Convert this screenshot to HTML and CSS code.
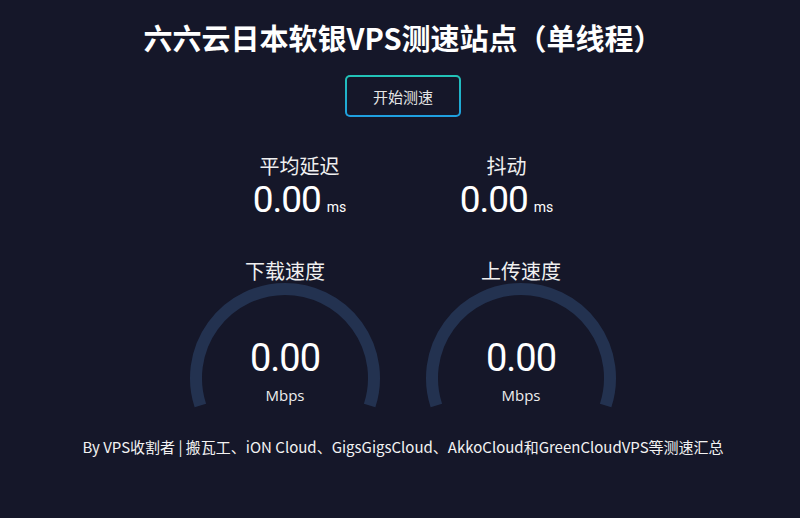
FILE: index.html
```html
<!DOCTYPE html>
<html lang="zh-CN">
<head>
    <meta charset="UTF-8">
    <meta name="viewport" content="width=device-width, initial-scale=1.0">
    <title>六六云日本软银VPS测速站点（单线程）</title>
    <link rel="stylesheet" href="styles.css">
</head>
<body>
    <div class="page">
        <h1>六六云日本软银VPS测速站点（单线程）</h1>

        <button type="button" class="start-btn">开始测速</button>

        <div class="row latency-row">
            <div class="stat">
                <div class="stat-label">平均延迟</div>
                <div class="stat-value">0.00<span class="unit">ms</span></div>
            </div>
            <div class="stat">
                <div class="stat-label">抖动</div>
                <div class="stat-value">0.00<span class="unit">ms</span></div>
            </div>
        </div>

        <div class="row gauge-row">
            <div class="gauge">
                <div class="gauge-label">下载速度</div>
                <div class="gauge-body">
                    <svg class="meter" width="200" height="134" viewBox="0 0 200 134">
                        <path d="M 15.36 125.5 A 89 89 0 1 1 184.64 125.5" />
                    </svg>
                    <div class="gauge-text">
                        <div class="gauge-value">0.00</div>
                        <div class="gauge-unit">Mbps</div>
                    </div>
                </div>
            </div>
            <div class="gauge">
                <div class="gauge-label">上传速度</div>
                <div class="gauge-body">
                    <svg class="meter" width="200" height="134" viewBox="0 0 200 134">
                        <path d="M 15.36 125.5 A 89 89 0 1 1 184.64 125.5" />
                    </svg>
                    <div class="gauge-text">
                        <div class="gauge-value">0.00</div>
                        <div class="gauge-unit">Mbps</div>
                    </div>
                </div>
            </div>
        </div>

        <p class="footer">By VPS收割者 | 搬瓦工、iON Cloud、GigsGigsCloud、AkkoCloud和GreenCloudVPS等测速汇总</p>
    </div>
</body>
</html>
```

FILE: styles.css
```css
/* Fondo oscuro y tipografía general */
body {
    margin: 0;
    background-color: #151729;
    color: #ffffff;
    font-family: "Noto Sans CJK SC", "Noto Sans", sans-serif;
}

.page {
    display: flex;
    flex-direction: column;
    align-items: center;
    padding-top: 17px;
    padding-left: 6px;
}

/* Título */
h1 {
    margin: 0;
    font-size: 29px;
    line-height: 40px;
    font-weight: 700;
    color: #ffffff;
}

/* Botón con borde degradado */
.start-btn {
    margin-top: 18px;
    width: 116px;
    height: 42px;
    border: 2px solid transparent;
    border-radius: 5px;
    background:
        linear-gradient(#151729, #151729) padding-box,
        linear-gradient(180deg, #22c3b6, #1f9fe0) border-box;
    color: #e6e6e6;
    font-family: "Noto Sans CJK SC", sans-serif;
    font-size: 15px;
    cursor: pointer;
}

.row {
    display: flex;
    justify-content: center;
}

/* Latencia y jitter */
.latency-row {
    margin-top: 35px;
}

.stat {
    width: 207px;
    text-align: center;
}

.stat-label {
    font-size: 20px;
    line-height: 28px;
    color: #f0f0f0;
}

.stat-value {
    font-family: Roboto, "Open Sans", sans-serif;
    font-size: 37px;
    line-height: 40px;
    letter-spacing: -1px;
    color: #ffffff;
}

.unit {
    margin-left: 6px;
    font-size: 14px;
    letter-spacing: 0;
}

/* Medidores de velocidad */
.gauge-row {
    margin-top: 32px;
}

.gauge {
    width: 236px;
    display: flex;
    flex-direction: column;
    align-items: center;
}

.gauge-label {
    margin-bottom: -3px;
    font-size: 20px;
    line-height: 24px;
    color: #f0f0f0;
}

.gauge-body {
    display: grid;
    width: 200px;
}

.meter,
.gauge-text {
    grid-area: 1 / 1;
}

.meter path {
    fill: none;
    stroke: #233250;
    stroke-width: 12;
}

.gauge-text {
    padding-top: 58px;
    text-align: center;
}

.gauge-value {
    font-family: Roboto, "Open Sans", sans-serif;
    font-size: 38px;
    line-height: 40px;
    letter-spacing: -1px;
}

.gauge-unit {
    margin-top: 7px;
    font-family: "Open Sans", Roboto, sans-serif;
    font-size: 15px;
    line-height: 20px;
    color: #eeeeee;
}

/* Pie */
.footer {
    margin: 23px 0 0;
    font-size: 15px;
    line-height: 20px;
    color: #f2f2f2;
}
```
